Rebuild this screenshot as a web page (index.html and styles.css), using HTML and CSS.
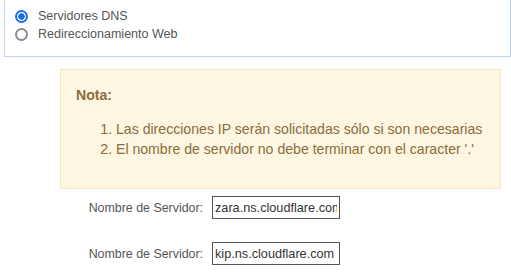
FILE: index.html
```html
<!DOCTYPE html>
<html lang="es">
<head>
<meta charset="utf-8">
<link rel="stylesheet" href="styles.css">
</head>
<body>
<div class="choice">
  <label class="opt"><input type="radio" name="mode" checked><span>Servidores DNS</span></label>
  <label class="opt"><input type="radio" name="mode"><span>Redireccionamiento Web</span></label>
</div>
<div class="note">
  <div class="note-title">Nota:</div>
  <ol class="note-list">
    <li>Las direcciones IP serán solicitadas sólo si son necesarias</li>
    <li>El nombre de servidor no debe terminar con el caracter '.'</li>
  </ol>
</div>
<div class="servers">
  <div class="row"><label class="lbl">Nombre de Servidor:</label><input class="field" type="text" value="zara.ns.cloudflare.com"></div>
  <div class="row"><label class="lbl">Nombre de Servidor:</label><input class="field" type="text" value="kip.ns.cloudflare.com"></div>
</div>
</body>
</html>
```
FILE: styles.css
```css
html, body {
  margin: 0;
  padding: 0;
  background: #fff;
  font-family: "Liberation Sans", Arial, sans-serif;
  font-size: 13px;
  color: #555;
  overflow: hidden;
}
.choice {
  margin: -10px 0 0 4px;
  width: 505px;
  border: 1px solid #c5d3e6;
  padding: 16px 0 13px 0;
  display: flex;
  flex-direction: column;
  font-size: 12.5px;
}
.opt {
  display: flex;
  align-items: center;
  height: 18px;
  gap: 10px;
  padding-left: 10px;
}
.opt input {
  -webkit-appearance: none;
  appearance: none;
  box-sizing: border-box;
  margin: 0;
  width: 13px;
  height: 13px;
  border-radius: 50%;
  border: 2px solid #8b8b96;
  background: #fff;
}
.opt input:checked {
  border-color: #1a6fe6;
  background: radial-gradient(circle, #1a6fe6 0 3px, #fff 3.5px);
}
.note {
  margin: 12px 0 0 60px;
  width: 424px;
  background: #fdf6e3;
  border: 1px solid #fbe6bd;
  padding: 15px 0 29px 15px;
  box-sizing: content-box;
  color: #8a6d3b;
  font-size: 14.1px;
  line-height: 20px;
}
.note-title {
  font-weight: bold;
}
.note-list {
  margin: 14px 0 0 0;
  padding-left: 40px;
}
.servers {
  display: flex;
  flex-direction: column;
  gap: 23px;
  margin-top: 7px;
  padding-left: 60px;
}
.row {
  display: flex;
  align-items: center;
  gap: 9px;
}
.lbl {
  width: 143px;
  text-align: right;
  color: #555;
  font-size: 12.4px;
}
.field {
  box-sizing: border-box;
  width: 128px;
  height: 23px;
  margin: 0;
  border: 1px solid #555;
  padding: 0 2px;
  font-family: "Liberation Sans", Arial, sans-serif;
  font-size: 12.7px;
  color: #333;
  outline: none;
  border-radius: 0;
}
```
